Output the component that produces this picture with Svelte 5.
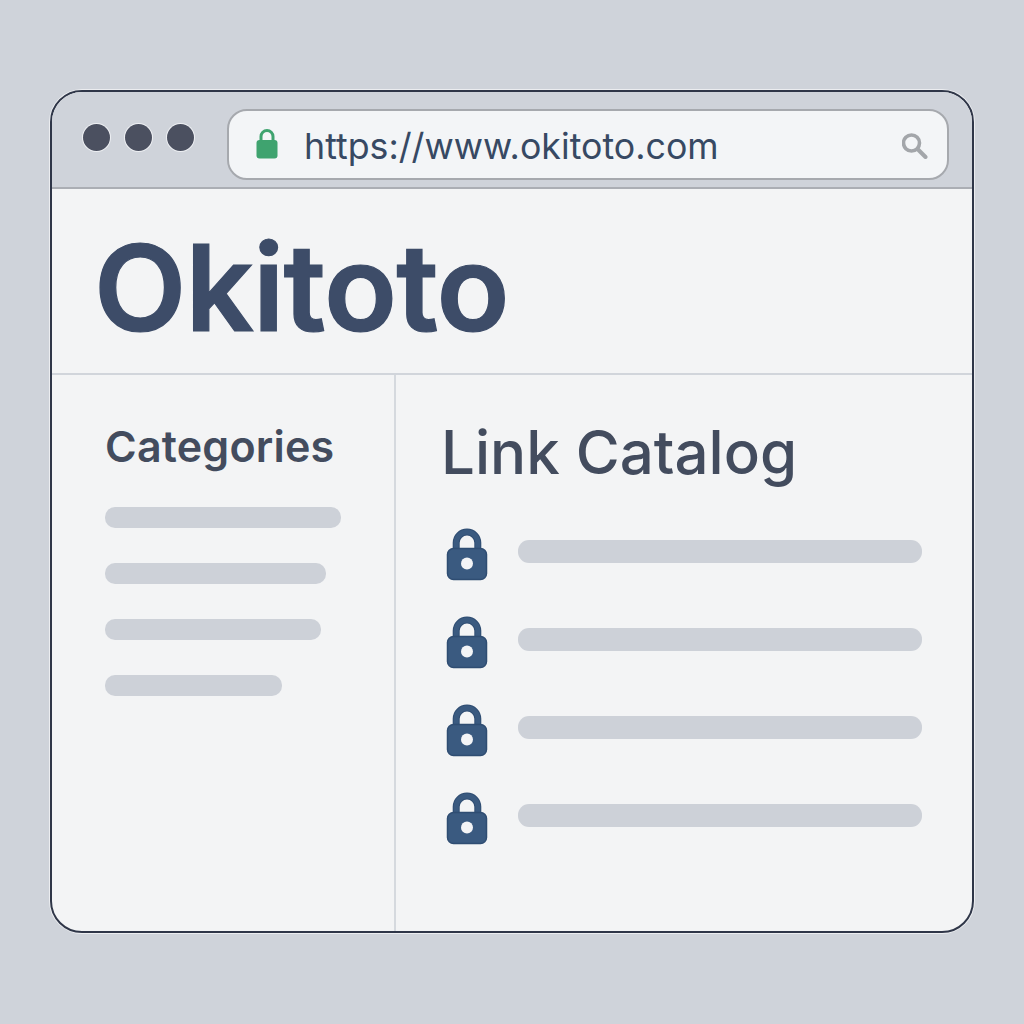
<script>
	const categories = [236, 221, 216, 177];
	const links = [0, 1, 2, 3];
</script>

<div class="page">
	<div class="window">
		<header class="chrome">
			<div class="dots">
				<span class="dot"></span>
				<span class="dot"></span>
				<span class="dot"></span>
			</div>
			<div class="address">
				<svg class="secure" viewBox="0 0 22 31" aria-hidden="true">
					<path d="M5 15V8.5a6 6 0 0 1 12 0V15" fill="none" stroke="#3fa36f" stroke-width="3" />
					<rect x="0.5" y="12" width="21" height="18.5" rx="3" fill="#3fa36f" />
				</svg>
				<span class="url">https://www.okitoto.com</span>
				<svg class="search" viewBox="0 0 26 26" aria-hidden="true">
					<circle cx="9.5" cy="10" r="8" fill="#f3f5f7" stroke="#a3a6aa" stroke-width="3.6" />
					<path d="M15.5 16L23.5 24" fill="none" stroke="#a3a6aa" stroke-width="4" stroke-linecap="round" />
				</svg>
			</div>
		</header>

		<div class="brand">
			<h1>Okitoto</h1>
		</div>

		<div class="body">
			<aside class="sidebar">
				<h2>Categories</h2>
				<div class="cat-list">
					{#each categories as width}
						<div class="cat-bar" style="width: {width}px"></div>
					{/each}
				</div>
			</aside>
			<main class="catalog">
				<h3>Link Catalog</h3>
				<div class="links">
					{#each links as link (link)}
						<div class="link-row">
							<svg class="lock" viewBox="0 0 42 53" aria-hidden="true">
								<path d="M10.2 24V14.8a10.8 10.8 0 0 1 21.6 0V24" fill="none" stroke="#2f4d72" stroke-width="7" />
								<path d="M10.2 24V14.8a10.8 10.8 0 0 1 21.6 0V24" fill="none" stroke="#3a5a80" stroke-width="5" />
								<rect x="1.5" y="20.5" width="39" height="31" rx="6" fill="#3a5a80" stroke="#2f4d72" stroke-width="1.5" />
								<circle cx="21" cy="35.5" r="6" fill="#f3f4f6" />
							</svg>
							<div class="link-bar"></div>
						</div>
					{/each}
				</div>
			</main>
		</div>
	</div>
</div>

<style>
	:global(body) {
		margin: 0;
		background: #cfd3da;
	}

	.page {
		width: 1024px;
		height: 1024px;
		box-sizing: border-box;
		padding: 90px 50px 91px 50px;
		font-family: Inter, 'Liberation Sans', sans-serif;
	}

	.window {
		height: 100%;
		box-sizing: border-box;
		display: flex;
		flex-direction: column;
		background: #f3f4f5;
		border: 2px solid #2f3648;
		border-radius: 32px;
		overflow: hidden;
		box-shadow: 0 0 0 1px rgba(255, 255, 255, 0.6);
	}

	.chrome {
		height: 97px;
		box-sizing: border-box;
		flex: none;
		display: flex;
		align-items: flex-start;
		padding: 17px 23px 0 31px;
		background: #cfd3da;
		border-bottom: 2px solid #abaeb4;
	}

	.dots {
		display: flex;
		gap: 15px;
		margin-top: 15px;
	}

	.dot {
		width: 27px;
		height: 27px;
		border-radius: 50%;
		background: #4b5060;
		box-shadow: 0 0 0 1px #eef0f3;
	}

	.address {
		flex: 1;
		height: 71px;
		box-sizing: border-box;
		margin-left: 33px;
		display: flex;
		align-items: center;
		padding: 0 19px 0 27px;
		background: #f3f5f7;
		border: 2px solid #a6a9ae;
		border-radius: 20px;
	}

	.secure {
		width: 22px;
		height: 31px;
		flex: none;
		margin-bottom: 2px;
	}

	.url {
		margin-left: 26px;
		font-size: 35.75px;
		line-height: 44px;
		padding-top: 3px;
		color: #374963;
		flex: 1;
	}

	.search {
		width: 26px;
		height: 26px;
		flex: none;
		margin-top: 2px;
	}

	.brand {
		height: 186px;
		box-sizing: border-box;
		flex: none;
		padding: 14px 0 0 42px;
		display: flex;
		align-items: center;
		border-bottom: 2px solid #d1d5db;
	}

	h1 {
		margin: 0;
		font-size: 120px;
		font-weight: 600;
		letter-spacing: -0.8px;
		-webkit-text-stroke: 1.2px #3d4c68;
		color: #3d4c68;
		line-height: 1;
	}

	.body {
		flex: 1;
		display: flex;
		min-height: 0;
	}

	.sidebar {
		width: 344px;
		box-sizing: border-box;
		flex: none;
		padding: 48px 0 0 53px;
		border-right: 2px solid #d5d9de;
	}

	h2 {
		margin: 0;
		font-size: 43px;
		font-weight: 600;
		letter-spacing: 0.2px;
		color: #434c5e;
		line-height: 47px;
	}

	.cat-list {
		margin-top: 37px;
		display: flex;
		flex-direction: column;
		gap: 35px;
	}

	.cat-bar {
		height: 21px;
		border-radius: 10px;
		background: #cdd1d8;
	}

	.catalog {
		flex: 1;
		box-sizing: border-box;
		padding: 43px 50px 0 45px;
	}

	h3 {
		margin: 0;
		font-size: 60px;
		font-weight: 500;
		color: #434c5e;
		line-height: 68px;
	}

	.links {
		margin-top: 42px;
		display: flex;
		flex-direction: column;
		gap: 35px;
	}

	.link-row {
		display: flex;
		align-items: flex-start;
		height: 53px;
	}

	.lock {
		width: 42px;
		height: 53px;
		flex: none;
		margin-left: 5px;
	}

	.link-bar {
		flex: 1;
		height: 23px;
		margin: 12px 0 0 30px;
		border-radius: 11px;
		background: #cdd1d8;
	}
</style>
